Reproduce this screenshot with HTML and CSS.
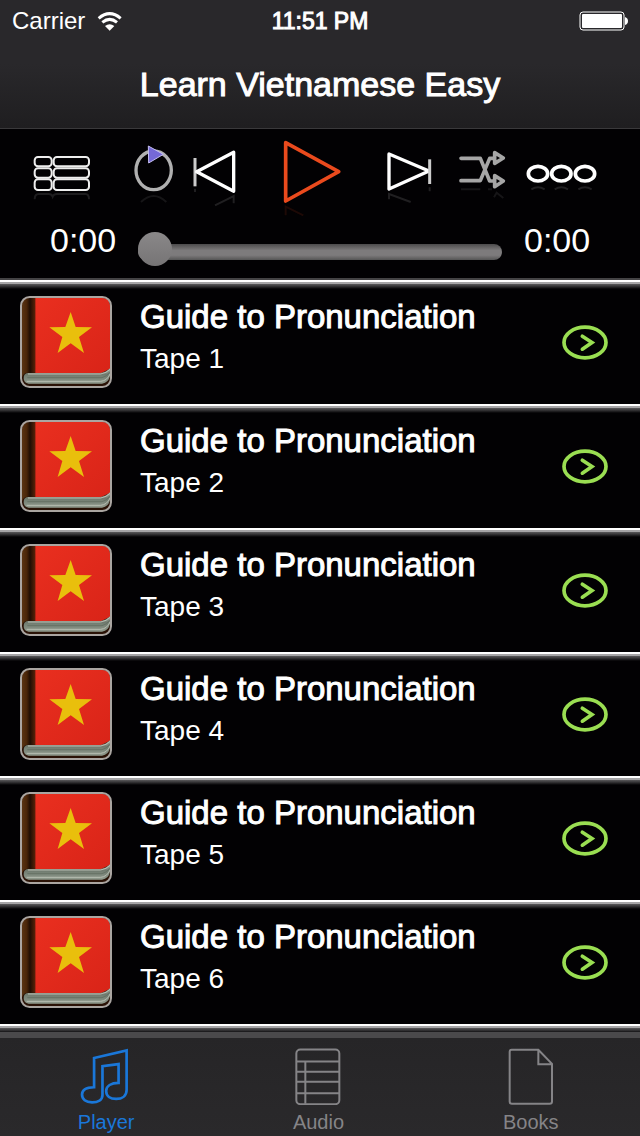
FILE: index.html
```html
<!DOCTYPE html>
<html lang="en">
<head>
    <meta charset="UTF-8">
    <meta name="viewport" content="width=device-width, initial-scale=1.0">
    <title>Learn Vietnamese Easy</title>
    <link rel="stylesheet" href="styles.css">
</head>
<body>
    <!-- shared icons for the track rows -->
    <svg class="sprite" aria-hidden="true">
        <defs>
            <linearGradient id="spine" x1="0" x2="1" y1="0" y2="0">
                <stop offset="0" stop-color="#5a3413"/>
                <stop offset="0.35" stop-color="#4a2508"/>
                <stop offset="0.6" stop-color="#1f0d03"/>
                <stop offset="1" stop-color="#5a2309"/>
            </linearGradient>
            <linearGradient id="cover" x1="0" x2="1" y1="0" y2="1">
                <stop offset="0" stop-color="#e92f1f"/>
                <stop offset="1" stop-color="#d92418"/>
            </linearGradient>
            <linearGradient id="pages" x1="0" x2="0" y1="0" y2="1">
                <stop offset="0" stop-color="#a9afa3"/>
                <stop offset="0.4" stop-color="#6f7a6e"/>
                <stop offset="1" stop-color="#919b8e"/>
            </linearGradient>
        </defs>
        <symbol id="book" viewBox="60 78 276 276">
            <rect x="63" y="81" width="270" height="270" rx="26" fill="#2a1206"/>
            <path d="M66 104Q68 84 90 84H106V308H82Q70 309 66 322Z" fill="url(#spine)"/>
            <path d="M106 84H308Q330 85 330 106V296L304 309H106Z" fill="url(#cover)"/>
            <path d="M84 309H300Q318 307 330 295V318Q326 338 306 341H86Q71 340 71 325Q71 310 84 309Z" fill="url(#pages)"/>
            <path d="M84 312H302Q320 309 330 298M80 334H302Q322 332 330 312" fill="none" stroke="#b9beb3" stroke-width="3"/>
            <path d="M82 323H306Q322 320 330 305" fill="none" stroke="#5c665b" stroke-width="2"/>
            <path d="M212 126L227 171L276 172L237 201L252 249L212 220L173 249L187 201L148 172L196 171Z" fill="#e9bf0c"/>
            <rect x="63" y="81" width="270" height="270" rx="26" fill="none" stroke="#aaa5a1" stroke-width="6"/>
        </symbol>
        <symbol id="arrow" viewBox="66 167 138 104">
            <ellipse cx="135" cy="219" rx="63" ry="46" fill="none" stroke="#9ade52" stroke-width="11"/>
            <path d="M127 200L156 219L127 239" fill="none" stroke="#9ade52" stroke-width="11" stroke-linecap="round"/>
        </symbol>
    </svg>

    <header class="top">
        <div class="status">
            <div class="carrier">
                <span>Carrier</span>
                <svg width="26" height="19" viewBox="294 31 78 57" aria-hidden="true">
                    <path d="M299 50Q332 22 365 50M310 62Q332 44 354 62" fill="none" stroke="#fff" stroke-width="9"/>
                    <path d="M318 73Q332 62 346 73L332 87Z" fill="#fff"/>
                </svg>
            </div>
            <span class="clock">11:51 PM</span>
            <svg class="battery" width="50" height="20" viewBox="-1 0 50 20" aria-hidden="true">
                <rect x="1" y="1" width="44" height="18" rx="3" fill="none" stroke="#fff"/>
                <rect x="3" y="3" width="40" height="14" rx="1" fill="#fff"/>
                <path d="M46 6Q49 7 49 10Q49 13 46 14Z" fill="#fff"/>
            </svg>
        </div>
        <h1>Learn Vietnamese Easy</h1>
    </header>

    <section class="player">
        <div class="controls">
            <button type="button" aria-label="Playlist">
                <svg width="58" height="82" viewBox="99 18 174 246">
                    <g fill="none" stroke="#eee" stroke-width="6">
                        <rect x="104" y="87" width="51" height="28" rx="10"/>
                        <rect x="161" y="87" width="106" height="28" rx="10"/>
                        <rect x="104" y="121" width="51" height="28" rx="10"/>
                        <rect x="161" y="121" width="106" height="28" rx="10"/>
                        <rect x="104" y="154" width="51" height="32" rx="10"/>
                        <rect x="161" y="154" width="106" height="32" rx="10"/>
                    </g>
                    <path class="reflection" d="M104 214Q104 198 116 198H146Q155 198 158 206Q161 198 171 198H256Q267 198 267 214" stroke="#eee"/>
                </svg>
            </button>
            <button type="button" aria-label="Repeat">
                <svg width="40" height="82" viewBox="401 18 120 246">
                    <ellipse cx="460" cy="127" rx="53" ry="58" fill="none" stroke="#b0b0b0" stroke-width="10"/>
                    <path d="M444 54L489 79L445 105Z" fill="#7569d6" stroke="#c5bff2" stroke-width="3"/>
                    <path class="reflection" d="M422 222Q460 186 498 222" stroke="#aaa"/>
                </svg>
            </button>
            <button type="button" aria-label="Previous">
                <svg width="44" height="82" viewBox="579 18 132 246">
                    <path d="M585 90V175" stroke="#ccc" stroke-width="9"/>
                    <path d="M590 131L701 73V190Z" fill="none" stroke="#fff" stroke-width="10" stroke-linejoin="round"/>
                    <path class="reflection" d="M585 182V192M645 232L701 204V226" stroke="#fff"/>
                </svg>
            </button>
            <button type="button" aria-label="Play">
                <svg width="58" height="82" viewBox="161 18 174 246">
                    <path d="M169 44L328 131L169 219Z" fill="none" stroke="#ea4a1d" stroke-width="11" stroke-linejoin="round"/>
                    <path class="reflection" d="M169 262V236L222 262" stroke="#ea4a1d"/>
                </svg>
            </button>
            <button type="button" aria-label="Next">
                <svg width="46" height="82" viewBox="471 18 138 246">
                    <path d="M480 78L600 129L480 183Z" fill="none" stroke="#fff" stroke-width="10" stroke-linejoin="round"/>
                    <path d="M602 94V168" stroke="#ccc" stroke-width="9"/>
                    <path class="reflection" d="M480 214V198L545 222M602 178V190" stroke="#fff"/>
                </svg>
            </button>
            <button type="button" aria-label="Shuffle">
                <svg width="47" height="82" viewBox="91 18 141 246">
                    <g fill="none" stroke="#a6a6a6" stroke-width="11" stroke-linecap="round" stroke-linejoin="round">
                        <path d="M97 91H155L183 159H194M97 158H155L183 91H194"/>
                        <path d="M198 74L224 90L198 106ZM198 143L224 159L198 176Z"/>
                    </g>
                    <path class="reflection" d="M97 184H155M178 184H190M196 208L204 194L224 210" stroke="#aaa"/>
                </svg>
            </button>
            <button type="button" aria-label="More">
                <svg width="71" height="82" viewBox="288 18 213 246">
                    <g fill="none" stroke="#fff" stroke-width="11">
                        <ellipse cx="324" cy="137" rx="29" ry="22"/>
                        <ellipse cx="394" cy="137" rx="29" ry="22"/>
                        <ellipse cx="465" cy="137" rx="29" ry="22"/>
                    </g>
                    <path class="reflection" d="M304 184Q324 172 344 184M374 184Q394 172 414 184M445 184Q465 172 485 184" stroke="#fff"/>
                </svg>
            </button>
        </div>
        <div class="timeline">
            <span>0:00</span>
            <input type="range" min="0" max="100" value="0" aria-label="Position">
            <span>0:00</span>
        </div>
    </section>

    <main>
        <ul class="tracks">
            <li>
                <svg class="cover" aria-hidden="true"><use href="#book"/></svg>
                <div class="info"><h2>Guide to Pronunciation</h2><p>Tape 1</p></div>
                <button type="button" aria-label="Open Tape 1"><svg width="46" height="35"><use href="#arrow"/></svg></button>
            </li>
            <li>
                <svg class="cover" aria-hidden="true"><use href="#book"/></svg>
                <div class="info"><h2>Guide to Pronunciation</h2><p>Tape 2</p></div>
                <button type="button" aria-label="Open Tape 2"><svg width="46" height="35"><use href="#arrow"/></svg></button>
            </li>
            <li>
                <svg class="cover" aria-hidden="true"><use href="#book"/></svg>
                <div class="info"><h2>Guide to Pronunciation</h2><p>Tape 3</p></div>
                <button type="button" aria-label="Open Tape 3"><svg width="46" height="35"><use href="#arrow"/></svg></button>
            </li>
            <li>
                <svg class="cover" aria-hidden="true"><use href="#book"/></svg>
                <div class="info"><h2>Guide to Pronunciation</h2><p>Tape 4</p></div>
                <button type="button" aria-label="Open Tape 4"><svg width="46" height="35"><use href="#arrow"/></svg></button>
            </li>
            <li>
                <svg class="cover" aria-hidden="true"><use href="#book"/></svg>
                <div class="info"><h2>Guide to Pronunciation</h2><p>Tape 5</p></div>
                <button type="button" aria-label="Open Tape 5"><svg width="46" height="35"><use href="#arrow"/></svg></button>
            </li>
            <li>
                <svg class="cover" aria-hidden="true"><use href="#book"/></svg>
                <div class="info"><h2>Guide to Pronunciation</h2><p>Tape 6</p></div>
                <button type="button" aria-label="Open Tape 6"><svg width="46" height="35"><use href="#arrow"/></svg></button>
            </li>
        </ul>
    </main>

    <nav class="tabs">
        <a href="#player" class="active">
            <svg width="53" height="57" viewBox="235 145 158 170" aria-hidden="true">
                <path d="M277 262V175L374 152V270C374 288 360 297 343 297C325 297 313 288 313 273C313 258 328 249 350 249V193L302 199V285C302 300 288 307 271 307C252 307 241 298 241 284C241 269 256 262 277 262Z" fill="none" stroke="currentColor" stroke-width="8"/>
            </svg>
            <span>Player</span>
        </a>
        <a href="#audio">
            <svg width="46" height="57" viewBox="227 145 138 170" aria-hidden="true">
                <g fill="none" stroke="currentColor" stroke-width="6">
                    <rect x="231" y="149" width="129" height="164" rx="12"/>
                    <path d="M231 185H360M231 216H360M231 246H360M231 280H360M258 185V312"/>
                </g>
            </svg>
            <span>Audio</span>
        </a>
        <a href="#books">
            <svg width="45" height="57" viewBox="211 145 135 170" aria-hidden="true">
                <path d="M222 150H302L343 192V305Q343 312 336 312H223Q216 312 216 305V156Q216 150 222 150ZM302 150V193H343" fill="none" stroke="currentColor" stroke-width="6"/>
            </svg>
            <span>Books</span>
        </a>
    </nav>
</body>
</html>
```
FILE: styles.css
```css
:root {
    --bar: #29282b;
    --blue: #1a77d9;
    --grey: #858487;
}

* {
    box-sizing: border-box;
}

body {
    margin: 0;
    min-height: 100vh;
    display: flex;
    flex-direction: column;
    background: #020103;
    color: #fff;
    font-family: "Liberation Sans", Arial, sans-serif;
}

h1, h2, p, ul {
    margin: 0;
    padding: 0;
    font-weight: normal;
}

button {
    border: none;
    padding: 0;
    background: none;
    cursor: pointer;
}

svg {
    display: block;
    flex-shrink: 0;
}

.sprite {
    position: absolute;
    width: 0;
    height: 0;
}

/* header */
.top {
    background: linear-gradient(var(--bar) 50%, #1f1e20);
}

.status {
    display: grid;
    grid-template-columns: 1fr auto 1fr;
    align-items: center;
    height: 40px;
    padding: 2px 12px 0;
    font-size: 24px;
}

.carrier {
    display: flex;
    align-items: center;
    gap: 12px;
}

.clock {
    font-size: 23px;
    -webkit-text-stroke: 1px #fff;
}

.battery {
    justify-self: end;
}

h1 {
    height: 88px;
    line-height: 88px;
    text-align: center;
    font-size: 34px;
    -webkit-text-stroke: 1px #fff;
}

/* player */
.player {
    border-top: 1px solid #3a393b;
    border-bottom: 2px solid #434244;
}

.controls {
    display: grid;
    grid-template-columns: 124fr 60fr 62fr 134fr 60fr 87fr 70fr 43fr;
    padding-top: 5px;
}

.controls button {
    display: flex;
    justify-content: center;
}

.reflection {
    fill: none;
    stroke-width: 6;
    opacity: 0.12;
}

.timeline {
    display: grid;
    grid-template-columns: 66px 1fr 66px;
    gap: 22px;
    height: 62px;
    padding: 4px 50px 0;
    font-size: 34px;
    line-height: 40px;
}

.timeline input {
    appearance: none;
    width: 100%;
    height: 34px;
    margin: 13px 0 0;
    background: none;
}

.timeline input::-webkit-slider-runnable-track {
    height: 16px;
    margin-top: 4px;
    border-radius: 8px;
    background: linear-gradient(#4c4b4c, #7d7b7c 40%, #7d7b7c 70%, #555);
}

.timeline input::-webkit-slider-thumb {
    appearance: none;
    width: 34px;
    height: 34px;
    margin-top: -12px;
    border-radius: 50%;
    background: linear-gradient(#8a8889, #767475);
}

/* track list */
main {
    flex: 1;
}

.tracks {
    list-style: none;
}

.tracks li,
.tracks::after {
    background: linear-gradient(#fff 2px, #a5a4a6 2px, #a5a4a6 4px, #5a595b 4px, #39383a 6px, #141315 8px, #020103 9px);
}

.tracks::after {
    content: "";
    display: block;
    height: 8px;
}

.tracks li {
    display: flex;
    align-items: center;
    gap: 28px;
    padding: 16px 32px 16px 20px;
}

.cover {
    width: 92px;
    height: 92px;
}

.info {
    flex: 1;
    align-self: flex-start;
}

.info h2 {
    font-size: 33px;
    line-height: 42px;
    -webkit-text-stroke: 1px #fff;
}

.info p {
    margin-top: 4px;
    font-size: 28px;
    line-height: 34px;
}

/* bottom tabs */
.tabs {
    display: flex;
    height: 104px;
    padding: 10px 3px 0 0;
    border-top: 6px solid #4a494b;
    background: linear-gradient(#262527, #2a292b);
}

.tabs a {
    flex: 1;
    display: flex;
    flex-direction: column;
    align-items: center;
    gap: 5px;
    color: var(--grey);
    font-size: 20px;
    line-height: 24px;
    text-decoration: none;
}

.tabs .active {
    color: var(--blue);
}
```
